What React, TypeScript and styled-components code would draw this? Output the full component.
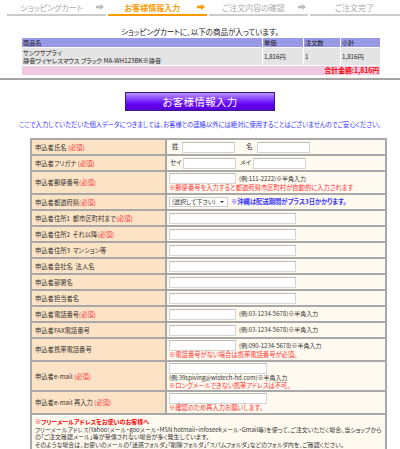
import React from 'react';
import styled, {createGlobalStyle} from "styled-components";

const GlobalStyle = createGlobalStyle`
    html, body {
        margin: 0;
        padding: 0;
        background: #fff;
        overflow: hidden;
    }
    body {
        font-family: "Noto Sans CJK JP", "Liberation Sans", sans-serif;
        font-feature-settings: "palt";
        color: #333;
    }
`

type StepProps = { $active?: boolean }
type WidthProps = { $w: number }
type HeightProps = { $h: number }

const steps = [
    {name: 'ショッピングカート', arrow: true},
    {name: 'お客様情報入力', arrow: true, active: true},
    {name: 'ご注文内容の確認', arrow: true},
    {name: 'ご注文完了', arrow: false},
]

const Arrow = ({color}: { color: string }) => (
    <svg width="8" height="6" viewBox="0 0 8 6">
        <path d="M0 1.8h4.2V0L8 3 4.2 6V4.2H0z" fill={color}/>
    </svg>
)

export default function App() {
    return (
        <Page>
            <GlobalStyle/>
            <StepBar>
                {steps.map(step => (
                    <Step key={step.name} $active={step.active}>
                        <StepLabel>{step.name}</StepLabel>
                        <StepArrow>
                            {step.arrow && <Arrow color={step.active ? '#ff9900' : '#bbbbbb'}/>}
                        </StepArrow>
                    </Step>
                ))}
            </StepBar>

            <CartCaption>ショッピングカートに、以下の商品が入っています。</CartCaption>
            <CartTable>
                <colgroup>
                    <col style={{width: 240}}/>
                    <col style={{width: 40}}/>
                    <col style={{width: 36}}/>
                    <col style={{width: 39}}/>
                </colgroup>
                <thead>
                <tr>
                    <CartHead>商品名</CartHead>
                    <CartHead>単価</CartHead>
                    <CartHead>注文数</CartHead>
                    <CartHead>小計</CartHead>
                </tr>
                </thead>
                <tbody>
                <tr>
                    <CartCell>サンワサプライ<br/>静音ワイヤレスマウス ブラック MA-WH123BK※静音</CartCell>
                    <CartCell>1,816円</CartCell>
                    <CartCell>1</CartCell>
                    <CartCell>1,816円</CartCell>
                </tr>
                <tr>
                    <CartTotal colSpan={4}>合計金額:1,816円</CartTotal>
                </tr>
                </tbody>
            </CartTable>

            <Rule/>

            <FormTitle>お客様情報入力</FormTitle>
            <Notice>ここで入力していただいた個人データにつきましては、お客様との連絡以外には絶対に使用することはございませんのでご安心ください。</Notice>

            <FormTable>
                <tbody>
                <tr>
                    <Label $h={14}>申込者氏名 <Req>(必須)</Req></Label>
                    <Value>
                        <Inline>
                            <Small>姓</Small><Input $w={53}/>
                            <NameGap><Small>名</Small></NameGap><Input $w={53}/>
                        </Inline>
                    </Value>
                </tr>
                <tr>
                    <Label $h={14}>申込者フリガナ <Req>(必須)</Req></Label>
                    <Value>
                        <Inline>
                            <Kana>セイ</Kana><Input $w={53}/>
                            <Kana>メイ</Kana><Input $w={53}/>
                        </Inline>
                    </Value>
                </tr>
                <tr>
                    <Label $h={21}>申込者郵便番号<Req>(必須)</Req></Label>
                    <Value>
                        <Inline><Input $w={67}/><Hint>(例:111-2222)※半角入力</Hint></Inline>
                        <RedNote>※郵便番号を入力すると都道府県市区町村が自動的に入力されます</RedNote>
                    </Value>
                </tr>
                <tr>
                    <Label $h={14}>申込者都道府県<Req>(必須)</Req></Label>
                    <Value>
                        <Inline>
                            <SelectBox>(選択して下さい)<SelectCaret/></SelectBox>
                            <BlueNote>※沖縄は配送期間がプラス3日かかります。</BlueNote>
                        </Inline>
                    </Value>
                </tr>
                <tr>
                    <Label $h={14}>申込者住所1&nbsp;&nbsp;都市区町村まで<Req>(必須)</Req></Label>
                    <Value><Input $w={127}/></Value>
                </tr>
                <tr>
                    <Label $h={14}>申込者住所2&nbsp;&nbsp;それ以降<Req>(必須)</Req></Label>
                    <Value><Input $w={127}/></Value>
                </tr>
                <tr>
                    <Label $h={14}>申込者住所3&nbsp;&nbsp;マンション等</Label>
                    <Value><Input $w={127}/></Value>
                </tr>
                <tr>
                    <Label $h={14}>申込者会社名&nbsp;&nbsp;法人名</Label>
                    <Value><Input $w={127}/></Value>
                </tr>
                <tr>
                    <Label $h={14}>申込者部署名</Label>
                    <Value><Input $w={127}/></Value>
                </tr>
                <tr>
                    <Label $h={14}>申込者担当者名</Label>
                    <Value><Input $w={127}/></Value>
                </tr>
                <tr>
                    <Label $h={14}>申込者電話番号<Req>(必須)</Req></Label>
                    <Value><Inline><Input $w={67}/><Hint>(例:03-1234-5678)※半角入力</Hint></Inline></Value>
                </tr>
                <tr>
                    <Label $h={14}>申込者FAX電話番号</Label>
                    <Value><Inline><Input $w={67}/><Hint>(例:03-1234-5678)※半角入力</Hint></Inline></Value>
                </tr>
                <tr>
                    <Label $h={21}>申込者携帯電話番号</Label>
                    <Value>
                        <Inline><Input $w={67}/><Hint>(例:090-1234-5678)※半角入力</Hint></Inline>
                        <RedNote>※電話番号がない場合は携帯電話番号が必須。</RedNote>
                    </Value>
                </tr>
                <tr>
                    <Label $h={28}>申込者e-mail <Req>(必須)</Req></Label>
                    <Value>
                        <Input $w={98}/>
                        <Hint>(例:39spiving@wistech-hd.com)※半角入力</Hint>
                        <RedNote>※ロングメールできない携帯アドレスは不可。</RedNote>
                    </Value>
                </tr>
                <tr>
                    <Label $h={21}>申込者e-mail 再入力 <Req>(必須)</Req></Label>
                    <Value>
                        <Input $w={98}/>
                        <RedNote>※確認のため再入力お願いします。</RedNote>
                    </Value>
                </tr>
                <tr>
                    <NotesCell colSpan={2}>
                        <NotesTitle>※フリーメールアドレスをお使いのお客様へ</NotesTitle>
                        フリーメールアドレス(Yahoo!メール・gooメール・MSN hotmail・infoseekメール・Gmail等)を使って、ご注文いただく場合、当ショップから<br/>
                        の「ご注文確認メール」等が受信されない場合が多く発生しています。<br/>
                        そのような場合は、お使いのメールの「迷惑フォルダ」「削除フォルダ」「スパムフォルダ」などのフォルダ内を、ご確認ください。
                    </NotesCell>
                </tr>
                </tbody>
            </FormTable>
        </Page>
    );
}

const Page = styled.div`
    width: 400px;
    height: 449px;
    overflow: hidden;
`

const StepBar = styled.div`
    display: flex;
    gap: 2px;
    padding-left: 7px;
`

const Step = styled.div<StepProps>`
    flex-shrink: 0;
    width: 99px;
    height: 14px;
    display: flex;
    align-items: center;
    border-bottom: 2px solid ${(props) => props.$active ? '#ff9900' : '#cccccc'};
    color: ${(props) => props.$active ? '#ff9900' : '#aaaaaa'};
    font-size: 8px;
    font-weight: ${(props) => props.$active ? 700 : 400};
`

const StepLabel = styled.div`
    flex: 1;
    text-align: center;
    white-space: nowrap;
`

const StepArrow = styled.div`
    width: 10px;
    display: flex;
    align-items: center;
`

const CartCaption = styled.div`
    margin-top: 11px;
    height: 10px;
    line-height: 10px;
    text-align: center;
    font-size: 7.5px;
    color: #222;
`

const CartTable = styled.table`
    margin: 0 0 0 21px;
    width: 360px;
    table-layout: fixed;
    border-collapse: separate;
    border-spacing: 1px;
    font-size: 6.2px;
    color: #222;
`

const CartHead = styled.th`
    height: 9px;
    padding: 0 1px;
    background: #9999e6;
    font-weight: 400;
    text-align: left;
    line-height: 9px;
`

const CartCell = styled.td`
    height: 17px;
    padding: 0 1px;
    background: #e4e4e4;
    line-height: 7.5px;
    vertical-align: middle;
    white-space: nowrap;
`

const CartTotal = styled.td`
    height: 9px;
    padding: 0 1px;
    background: #f0c8e0;
    color: #ff0000;
    font-weight: 700;
    text-align: right;
    line-height: 9px;
    font-size: 6.8px;
`

const Rule = styled.div`
    margin-top: 2px;
    height: 2px;
    background: #a4a4a4;
`

const FormTitle = styled.div`
    width: 150px;
    height: 19px;
    margin: 12px auto 0;
    box-sizing: border-box;
    display: flex;
    align-items: center;
    justify-content: center;
    border: 1px solid #3a1a8a;
    background: linear-gradient(#b894ff 0%, #7a2cff 45%, #6000f0 70%, #5a00d8 100%);
    color: #fff;
    font-size: 10.5px;
    letter-spacing: 0.3px;
`

const Notice = styled.div`
    margin-top: 9px;
    height: 9px;
    line-height: 9px;
    text-align: center;
    font-size: 6.3px;
    color: #3333ff;
    white-space: nowrap;
`

const FormTable = styled.table`
    margin: 9px 0 0 30px;
    width: 343px;
    border-collapse: collapse;
    border: 2px solid #a8a8a8;
    font-size: 6.3px;
    color: #333;
`

const Label = styled.td<HeightProps>`
    width: 127px;
    height: ${(props) => props.$h}px;
    padding: 0 3px;
    background: #fde3c6;
    border: 2px solid #a8a8a8;
    white-space: nowrap;
    vertical-align: middle;
`

const Req = styled.span`
    color: #ff3333;
`

const Value = styled.td`
    padding: 1px 2px;
    background: #fffaf0;
    border: 2px solid #a8a8a8;
    vertical-align: middle;
    line-height: 7.5px;
`

const Inline = styled.div`
    display: flex;
    align-items: center;
    gap: 3px;
    white-space: nowrap;
`

const Input = styled.input<WidthProps>`
    display: block;
    width: ${(props) => props.$w}px;
    height: 11px;
    box-sizing: border-box;
    margin: 0;
    padding: 0;
    border: 1px solid #d4d4d4;
    border-top-color: #bbb;
    background: #fff;
`

const Small = styled.span`
    padding: 0 1px 0 3px;
`

const Kana = styled.span`
    padding-left: 1px;
    width: 10px;
`

const NameGap = styled.span`
    margin-left: 5px;
`

const Hint = styled.div`
    font-size: 6px;
    color: #333;
    white-space: nowrap;
`

const RedNote = styled.div`
    color: #ff3333;
    white-space: nowrap;
`

const BlueNote = styled.span`
    color: #3333ff;
    font-weight: 700;
`

const SelectBox = styled.div`
    position: relative;
    width: 59px;
    height: 10px;
    box-sizing: border-box;
    padding-left: 2px;
    border: 1px solid #ccc;
    background: #fff;
    font-size: 6px;
    line-height: 8px;
`

const SelectCaret = styled.span`
    position: absolute;
    right: 3px;
    top: 3px;
    border-left: 2px solid transparent;
    border-right: 2px solid transparent;
    border-top: 2px solid #333;
`

const NotesCell = styled.td`
    padding: 3px 3px 6px;
    background: #fffaf0;
    border: 2px solid #a8a8a8;
    line-height: 7.6px;
    font-size: 6px;
    white-space: nowrap;
`

const NotesTitle = styled.div`
    color: #ff0000;
    font-weight: 700;
`
